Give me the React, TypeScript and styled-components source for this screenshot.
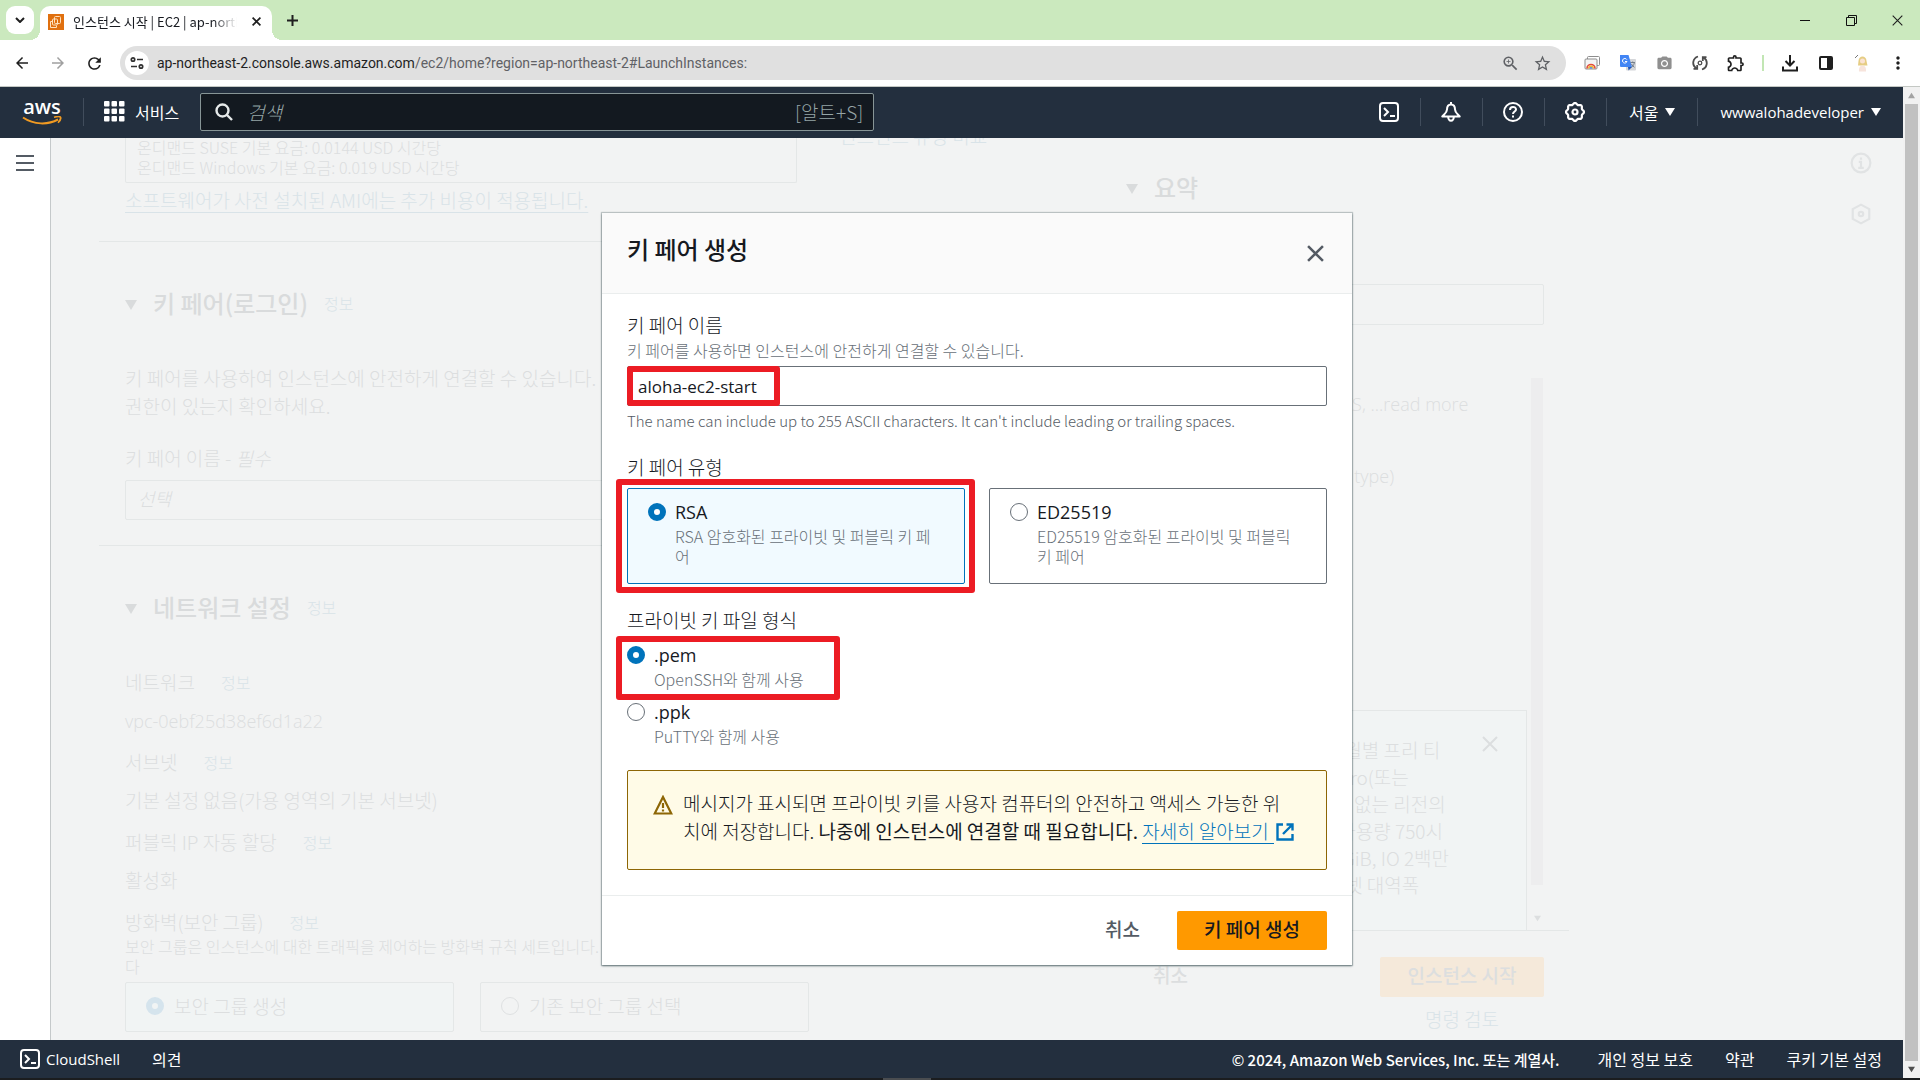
import React from 'react';
import styled, { createGlobalStyle, css } from 'styled-components';
import {
  MdArrowBack,
  MdArrowForward,
  MdRefresh,
  MdZoomIn,
  MdStarBorder,
  MdPhotoCamera,
  MdOutlineExtension,
  MdMoreVert,
} from 'react-icons/md';

const hangul = '"Noto Sans CJK KR", "Open Sans", sans-serif';
const latin = '"Open Sans", "Noto Sans CJK KR", sans-serif';

const c = {
  navy: '#232f3e',
  ink: '#16191f',
  grey: '#687078',
  link: '#0073bb',
  orange: '#ff9900',
  mark: '#ec1c24',
  washBg: '#f2f3f3',
  wash: '#dcdedf',
  washStrong: '#d9dbdc',
  washLine: '#e4e7e7',
  washLink: '#d9e3e8',
};

const Global = createGlobalStyle`
  * { box-sizing: border-box; }
  body { margin: 0; font-family: ${hangul}; font-weight: 300; color: ${c.ink}; }
  button, input, select { font: inherit; color: inherit; margin: 0; }
  button { background: none; border: 0; padding: 0; cursor: pointer; }
  a { text-decoration: none; }
  h1, h2, p, dl, dd, dt, fieldset { margin: 0; padding: 0; border: 0; }
  svg { display: block; flex: none; }
`;

const Window = styled.div`
  display: flex;
  flex-direction: column;
  height: 100vh;
  overflow: hidden;
`;

/* ---------- browser chrome ---------- */

const TabStrip = styled.div`
  display: flex;
  align-items: center;
  height: 40px;
  padding-left: 6px;
  background: #cbe9be;
`;

const TabSearch = styled.button`
  display: grid;
  place-items: center;
  width: 28px;
  height: 28px;
  border-radius: 9px;
  background: #fff;
`;

const Tab = styled.div`
  position: relative;
  display: flex;
  align-items: center;
  align-self: flex-end;
  width: 232px;
  height: 34px;
  margin-left: 6px;
  padding: 0 9px 3px 8px;
  border-radius: 10px 10px 0 0;
  background: #fff;
  &::before,
  &::after {
    content: '';
    position: absolute;
    bottom: 0;
    width: 10px;
    height: 10px;
  }
  &::before {
    left: -10px;
    background: radial-gradient(circle at 0 0, transparent 10px, #fff 10px);
  }
  &::after {
    right: -10px;
    background: radial-gradient(circle at 100% 0, transparent 10px, #fff 10px);
  }
`;

const TabTitle = styled.span`
  flex: 1;
  margin: 0 12px 0 9px;
  overflow: hidden;
  white-space: nowrap;
  font-size: 13px;
  font-weight: 400;
  line-height: 20px;
  mask-image: linear-gradient(to right, #000 85%, transparent);
`;

const IconButton = styled.button<{ $w: number }>`
  display: grid;
  place-items: center;
  width: ${(p) => p.$w}px;
  height: 28px;
  flex: none;
  color: #1f1f1f;
`;

const WindowButtons = styled.div`
  display: flex;
  margin-left: auto;
`;

const Toolbar = styled.div`
  display: flex;
  align-items: center;
  height: 47px;
  padding: 0 4px;
  border-bottom: 1px solid #c4c8c4;
  background: #fff;
`;

const Address = styled.div`
  display: flex;
  flex: 1;
  align-items: center;
  height: 34px;
  margin: 0 8px;
  padding: 0 8px 0 5px;
  border-radius: 17px;
  background: #e0e0e0;
`;

const SiteInfo = styled.button`
  display: grid;
  place-items: center;
  width: 24px;
  height: 24px;
  margin-right: 8px;
  border-radius: 50%;
  background: #fff;
`;

const Url = styled.div`
  flex: 1;
  color: #5f6165;
  font-family: Roboto, ${latin};
  font-size: 14px;
  font-weight: 400;
  white-space: nowrap;
  overflow: hidden;
  b {
    color: #1f1f1f;
    font-weight: 400;
  }
`;

const Divider = styled.span`
  width: 2px;
  height: 16px;
  margin: 0 8px;
  background: #c2e6b4;
`;

/* ---------- console frame ---------- */

const Viewport = styled.div`
  display: flex;
  flex: 1;
  min-height: 0;
`;

const Console = styled.div`
  display: flex;
  flex: 1;
  flex-direction: column;
  min-width: 0;
`;

const Nav = styled.header`
  display: flex;
  align-items: center;
  height: 51px;
  padding: 0 0 2px 22px;
  background: ${c.navy};
  color: #fff;
`;

const Logo = styled.a`
  display: flex;
  flex-direction: column;
  align-items: center;
  width: 40px;
  color: #fff;
  font-family: ${latin};
  font-size: 20px;
  font-weight: 600;
  line-height: 18px;
`;

const NavRule = styled.span`
  width: 1px;
  height: 28px;
  margin: 0 20px 0 21px;
  background: #414d5c;
`;

const Services = styled.button`
  display: flex;
  align-items: center;
  gap: 10px;
  margin-right: 21px;
  font-size: 16px;
  font-weight: 400;
`;

const SearchBox = styled.label`
  display: flex;
  flex: 0 1 674px;
  align-items: center;
  gap: 14px;
  height: 38px;
  padding: 0 10px 0 14px;
  border: 1px solid #879596;
  border-radius: 2px;
  background: #131920;
  color: #95a5a6;
  font-size: 19px;
  input {
    flex: 1;
    min-width: 0;
    padding: 0;
    border: 0;
    outline: 0;
    background: none;
  }
  input::placeholder {
    color: #95a5a6;
    font-style: italic;
  }
`;

const NavEnd = styled.div`
  display: flex;
  align-items: center;
  margin-left: auto;
`;

const NavCell = styled.button<{ $first?: boolean; $wide?: boolean }>`
  display: flex;
  align-items: center;
  justify-content: center;
  gap: 7px;
  width: ${(p) => (p.$wide ? 'auto' : '62px')};
  height: 28px;
  padding: 0 ${(p) => (p.$wide ? 22 : 0)}px;
  border-left: 1px solid ${(p) => (p.$first ? 'transparent' : '#414d5c')};
  font-size: 16px;
  font-weight: 400;
`;

const UserName = styled.span`
  font-family: ${latin};
  font-size: 15px;
  font-weight: 500;
`;

const Workspace = styled.div`
  display: flex;
  flex: 1;
  min-height: 0;
`;

const SideRail = styled.nav`
  display: flex;
  justify-content: center;
  align-items: flex-start;
  width: 51px;
  padding-top: 17px;
  border-right: 1px solid #c5c9ca;
  background: #fff;
`;

const Footer = styled.footer`
  display: flex;
  align-items: center;
  gap: 32px;
  height: 38px;
  padding: 0 21px 0 20px;
  background: ${c.navy};
  font-size: 16px;
  font-weight: 400;
  a,
  span {
    color: #fff;
  }
`;

const ShellLink = styled.button`
  display: flex;
  align-items: center;
  gap: 6px;
  color: #fff;
  font-family: ${latin};
  font-size: 15px;
  font-weight: 500;
`;

const Copyright = styled.span`
  margin-left: auto;
  margin-right: 6px;
  font-size: 15px;
  font-weight: 500;
`;

const PageScroll = styled.div`
  display: flex;
  flex-direction: column;
  align-items: center;
  width: 17px;
  background: #f1f1f1;
`;

const ScrollArrow = styled.span<{ $down?: boolean }>`
  display: grid;
  place-items: center;
  height: 17px;
  color: ${(p) => (p.$down ? '#505050' : '#a3a3a3')};
  svg {
    transform: ${(p) => (p.$down ? 'none' : 'rotate(180deg)')};
  }
`;

const ScrollThumb = styled.span`
  flex: 1;
  width: 13px;
  background: #c1c1c1;
`;

const Taskbar = styled.div`
  display: flex;
  justify-content: center;
  height: 2px;
  padding-right: 106px;
  background: #1b1d1f;
  &::after {
    content: '';
    width: 48px;
    background: #4a4d50;
  }
`;

/* ---------- dimmed page behind the dialog ---------- */

const Main = styled.main`
  position: relative;
  flex: 1;
  min-width: 0;
  overflow: hidden;
  background: ${c.washBg};
`;

const Page = styled.div`
  display: flex;
  height: 100%;
  padding-left: 48px;
  color: ${c.wash};
  font-size: 19px;
  line-height: 28px;
`;

const LaunchForm = styled.div`
  flex: 0 1 969px;
  min-width: 0;
`;

const Section = styled.section`
  padding: 45px 26px 25px;
  border-bottom: 1px solid ${c.washLine};
`;

const TypeSection = styled(Section)`
  padding-top: 0;
  padding-bottom: 27px;
`;

const TypeRow = styled.div`
  display: flex;
  align-items: flex-start;
  gap: 42px;
  margin-top: -16px;
`;

const PriceBox = styled.div`
  width: 672px;
  padding: 15px 11px 5px;
  border: 1px solid ${c.washLine};
  border-top: 0;
  border-radius: 2px;
  font-size: 16px;
  line-height: 20px;
`;

const PaleLink = styled.a<{ $small?: boolean; $rule?: boolean }>`
  color: ${c.washLink};
  font-size: ${(p) => (p.$small ? 16 : 19)}px;
  text-decoration: ${(p) => (p.$rule ? 'underline' : 'none')};
  text-underline-offset: 4px;
`;

const AmiNote = styled.p`
  margin-top: 3px;
`;

const Heading = styled.h2`
  display: flex;
  align-items: center;
  gap: 16px;
  height: 32px;
  margin-bottom: 45px;
  color: ${c.washStrong};
  font-size: 24px;
  font-weight: 500;
  svg {
    margin-top: 4px;
  }
  a {
    font-weight: 300;
  }
`;

const PaleSelect = styled.label`
  display: block;
  margin-top: 24px;
  select {
    display: block;
    appearance: none;
    width: 672px;
    height: 40px;
    margin-top: 8px;
    padding: 0 12px 4px;
    border: 1px solid ${c.washLine};
    border-radius: 2px;
    background: none;
    font-size: 18px;
    font-style: italic;
  }
`;

const Fields = styled.dl`
  display: flex;
  flex-direction: column;
  gap: 14px;
  dt {
    display: flex;
    gap: 26px;
    height: 28px;
  }
  dd {
    height: 28px;
    margin-top: 10px;
  }
`;

const Small = styled.p`
  font-size: 16px;
  line-height: 20px;
`;

const LatinText = styled.span`
  font-family: ${latin};
  font-size: 18px;
  font-weight: 400;
`;

const PaleLatin = styled(LatinText)`
  font-weight: 300;
`;

const GroupTiles = styled.div`
  display: flex;
  gap: 26px;
  margin-top: 6px;
`;

const GroupTile = styled.label<{ $on?: boolean }>`
  display: flex;
  align-items: center;
  gap: 10px;
  width: 329px;
  height: 50px;
  padding: 0 20px 3px;
  border: 1px solid ${c.washLine};
  border-radius: 2px;
  background: ${(p) => (p.$on ? '#f1f4f4' : 'none')};
`;

const Summary = styled.aside`
  display: flex;
  flex: 0 1 468px;
  flex-direction: column;
  height: 930px;
  margin-left: 33px;
  padding-top: 33px;
`;

const SummaryHead = styled(Heading)`
  margin: 0 25px 81px;
`;

const PaleInput = styled.input`
  height: 41px;
  margin: 0 25px;
  border: 1px solid ${c.washLine};
  border-radius: 2px;
  background: none;
`;

const SummaryScroll = styled.div`
  display: flex;
  height: 564px;
  margin: 41px 25px 0;
`;

const SummaryBody = styled.div`
  flex: 1;
  display: flex;
  flex-direction: column;
  gap: 44px;
  padding: 24px 3px 0 0;
`;

const ThinScroll = styled.div`
  display: flex;
  flex-direction: column;
  align-items: center;
  width: 14px;
  padding-bottom: 8px;
  color: ${c.wash};
  &::before {
    content: '';
    flex: 1;
    width: 12px;
    margin: 12px 0 30px;
    background: #ededee;
  }
`;

const FreeTier = styled.div`
  display: flex;
  flex: 1;
  align-items: flex-start;
  justify-content: space-between;
  margin-top: 176px;
  padding: 25px 28px 0 56px;
  border: 1px solid ${c.washLine};
  border-bottom: 0;
  background: #f1f4f4;
  line-height: 27px;
  p {
    white-space: pre;
  }
`;

const SummaryFoot = styled.div`
  display: grid;
  grid-template-columns: 1fr 164px;
  row-gap: 8px;
  align-items: center;
  padding: 26px 25px 0 52px;
  border-top: 1px solid ${c.washLine};
  font-weight: 500;
  button {
    padding-bottom: 4px;
  }
  button:first-child {
    justify-self: start;
  }
  a {
    grid-column: 2;
    justify-self: center;
    font-weight: 300;
  }
`;

const PaleButton = styled.button`
  height: 40px;
  border-radius: 2px;
  background: #f5e9da;
`;

const ToolRail = styled.div`
  display: flex;
  flex-direction: column;
  align-items: center;
  gap: 29px;
  width: 84px;
  margin-left: auto;
  padding-top: 14px;
  color: #e1e3e4;
`;

/* ---------- dialog ---------- */

const Overlay = styled.div`
  position: absolute;
  inset: 0;
  display: flex;
  align-items: center;
  justify-content: center;
`;

const Dialog = styled.div`
  width: 750px;
  background: #fff;
  font-size: 19px;
  line-height: 28px;
  box-shadow: 0 1px 2px rgba(0, 28, 36, 0.5), 0 0 1px 1px rgba(0, 28, 36, 0.2);
`;

const DialogHead = styled.div`
  display: flex;
  align-items: center;
  justify-content: space-between;
  height: 81px;
  padding: 0 28px 8px 25px;
  border-bottom: 1px solid #eaeded;
  background: #fafafa;
  h1 {
    font-size: 24px;
    font-weight: 500;
  }
`;

const CloseButton = styled.button`
  padding-top: 8px;
  color: #545b64;
`;

const DialogBody = styled.div`
  display: flex;
  flex-direction: column;
  gap: 22px;
  padding: 17px 25px 25px;
`;

const Label = styled.label`
  display: block;
  margin-bottom: 1px;
`;

const Legend = styled.legend`
  padding: 0 0 7px;
`;

const Hint = styled.span<{ $latin?: boolean }>`
  display: block;
  color: ${(p) => (p.$latin ? '#545b64' : c.grey)};
  font-size: ${(p) => (p.$latin ? 15 : 16)}px;
  line-height: 20px;
`;

const marked = css<{ $top: number; $right: number; $bottom: number; $left: number }>`
  &::after {
    content: '';
    position: absolute;
    top: ${(p) => p.$top}px;
    right: ${(p) => p.$right}px;
    bottom: ${(p) => p.$bottom}px;
    left: ${(p) => p.$left}px;
    border: 6px solid ${c.mark};
    border-radius: 3px;
    pointer-events: none;
  }
`;

const Marked = styled.div<{ $top: number; $right: number; $bottom: number; $left: number }>`
  position: relative;
  ${marked}
`;

const InputSlot = styled(Marked)`
  margin: 6px 0 5px;
`;

const NameInput = styled.input`
  display: block;
  width: 100%;
  height: 40px;
  padding: 0 10px;
  border: 1px solid #687078;
  border-radius: 2px;
  font-family: ${latin};
  font-size: 17px;
  font-weight: 400;
`;

const Tiles = styled.div`
  display: grid;
  grid-template-columns: 1fr 1fr;
  gap: 24px;
`;

const Choice = styled.label<{ $tile?: boolean; $on?: boolean }>`
  display: grid;
  grid-template-columns: 18px 1fr;
  column-gap: 9px;
  align-items: center;
  ${Hint} {
    grid-column: 2;
  }
  ${(p) =>
    p.$tile &&
    css`
      height: 96px;
      align-content: start;
      padding: 9px 26px 9px 20px;
      border: 1px solid ${p.$on ? c.link : c.grey};
      border-radius: 2px;
      background: ${p.$on ? '#f1faff' : '#fff'};
    `}
`;

const Radio = styled.input<{ $pale?: boolean }>`
  appearance: none;
  width: 18px;
  height: 18px;
  border: 1px solid ${(p) => (p.$pale ? '#dfe1e2' : c.grey)};
  border-radius: 50%;
  background: ${(p) => (p.$pale ? 'none' : '#fff')};
  &:checked {
    border: 6px solid ${(p) => (p.$pale ? '#d5e4ed' : c.link)};
  }
`;

const Formats = styled.div`
  display: flex;
  flex-direction: column;
  align-items: flex-start;
  gap: 9px;
`;

const Notice = styled.div`
  display: flex;
  gap: 10px;
  height: 100px;
  margin-top: 2px;
  padding: 18px 25px;
  border: 1px solid #8d6605;
  border-radius: 2px;
  background: #fffbe7;
  svg {
    margin-top: 6px;
  }
  p {
    padding-right: 5px;
  }
`;

const MoreLink = styled.a`
  display: inline-flex;
  gap: 2px;
  color: ${c.link};
  span {
    height: 27px;
    padding-right: 5px;
    border-bottom: 1px solid ${c.link};
  }
`;

const DialogFoot = styled.div`
  display: flex;
  justify-content: flex-end;
  gap: 37px;
  padding: 15px 25px;
  border-top: 1px solid #eaeded;
  font-weight: 500;
`;

const CancelButton = styled.button`
  padding-bottom: 3px;
  color: #545b64;
`;

const PrimaryButton = styled.button`
  height: 39px;
  padding: 0 27px 3px;
  border-radius: 2px;
  background: ${c.orange};
`;

/* ---------- drawings ---------- */

const Caret = ({ size = 10 }: { size?: number }) => (
  <svg width={size} height={size} viewBox="0 0 11 11" fill="currentColor">
    <path d="M0 1h11L5.500 10z" />
  </svg>
);

const Cross = ({ size, stroke }: { size: number; stroke: number }) => (
  <svg width={size} height={size} viewBox="0 0 16 16" stroke="currentColor" strokeWidth={stroke}>
    <path d="M1 1l14 14M15 1L1 15" />
  </svg>
);

const ShellIcon = ({ size = 20 }: { size?: number }) => (
  <svg width={size} height={size} viewBox="0 0 20 20" fill="none" stroke="currentColor" strokeWidth="2">
    <rect x="1" y="1" width="18" height="18" rx="3" />
    <path d="M5 6l4 4-4 4M11 14h5" />
  </svg>
);

const BellIcon = () => (
  <svg width="20" height="20" viewBox="0 0 20 20" fill="none" stroke="currentColor" strokeWidth="2" strokeLinejoin="round">
    <path d="M10 0v2.500M10 2.500c-3 0-4 2.200-4 5 0 3-2.500 4.500-4.700 7h17.400c-2.200-2.500-4.700-4-4.700-7 0-2.800-1-5-4-5z" />
    <path d="M7.200 15a2.800 3.800 0 0 0 5.600 0" />
  </svg>
);

const HelpIcon = () => (
  <svg width="20" height="20" viewBox="0 0 20 20" fill="none" stroke="currentColor" strokeWidth="2">
    <circle cx="10" cy="10" r="9" />
    <path d="M7 8c0-4 6-4 6-.5C13 9.500 10 9.500 10 12M10 13.500v2" />
  </svg>
);

const gearPath = Array.from({ length: 48 }, (_, i) => {
  const a = (i / 48) * Math.PI * 2;
  const r = 8.300 + 0.800 * Math.cos(a * 8);
  return `${i ? 'L' : 'M'}${(10 + r * Math.sin(a)).toFixed(2)} ${(10 - r * Math.cos(a)).toFixed(2)}`;
}).join('');

const GearIcon = () => (
  <svg width="20" height="20" viewBox="0 0 20 20" fill="none" stroke="currentColor" strokeWidth="2.200" strokeLinejoin="round">
    <path d={`${gearPath}Z`} />
    <circle cx="10" cy="10" r="2.500" />
  </svg>
);

const GridIcon = () => (
  <svg width="21" height="21" viewBox="0 0 21 21" fill="currentColor">
    {[0, 7.500, 15].map((y) => [0, 7.500, 15].map((x) => <rect key={`${x}-${y}`} x={x} y={y} width="5.500" height="5.500" rx="1" />))}
  </svg>
);

const SearchIcon = () => (
  <svg width="18" height="18" viewBox="0 0 18 18" fill="none" stroke="#e6eaea" strokeWidth="2.400">
    <circle cx="7.500" cy="7.500" r="6" />
    <path d="M12 12l5 5" />
  </svg>
);

const Smile = () => (
  <svg width="40" height="9" viewBox="0 0 40 9" fill="none" stroke="#f09a22" strokeWidth="2">
    <path d="M1 1.500c11 7.500 25 7.500 35 2" />
    <path d="M32 1.200c3-.7 6-.7 6.500 0s-.3 3.300-2.500 5.500" strokeWidth="1.600" />
  </svg>
);

const Ec2Icon = () => (
  <svg width="16" height="16" viewBox="0 0 16 16" fill="none" stroke="#ffe1bd">
    <rect width="16" height="16" fill="#e0700f" stroke="none" />
    <rect x="6.500" y="2.500" width="6" height="7" rx="1" />
    <rect x="4.500" y="5" width="5" height="6" rx="1" />
    <path d="M4.500 7.500h-2v6h6v-2" />
  </svg>
);

const SiteIcon = () => (
  <svg width="14" height="14" viewBox="0 0 14 14" fill="none" stroke="#303030" strokeWidth="1.700">
    <circle cx="3" cy="3.500" r="1.700" />
    <path d="M7 3.500h6M1 10.500h6" />
    <circle cx="11" cy="10.500" r="1.700" />
  </svg>
);

const RainbowIcon = () => (
  <svg width="16" height="16" viewBox="0 0 16 16" fill="none">
    <rect x="3.500" y="1.500" width="12" height="9" rx="1" stroke="#8d8d8d" />
    <rect x="1" y="4" width="12" height="10" rx="1" fill="#f4f4f4" stroke="#8d8d8d" />
    <path d="M3 13.500a4 4 0 0 1 8 0" stroke="#e14b3b" strokeWidth="1.600" />
    <path d="M4.700 13.500a2.300 2.300 0 0 1 4.600 0" stroke="#f2b632" strokeWidth="1.500" />
    <path d="M5.500 13.500a1.500 1.500 0 0 1 3 0" fill="#3c7de0" />
  </svg>
);

const TranslateIcon = () => (
  <svg width="16" height="16" viewBox="0 0 16 16" fill="none">
    <rect x="6" y="4" width="10" height="11.500" rx="1" fill="#d4d6d9" />
    <path d="M0 0h8.500l3.500 12H1a1 1 0 0 1-1-1z" fill="#4285f4" />
    <path d="M8.500 15.500l3.500-3.500H8z" fill="#2458b8" />
    <path d="M6.800 4.600A2.300 2.300 0 1 0 7 6.500H5" stroke="#fff" />
    <path d="M10.500 7.500h4.500M12.700 6.500v1M14.300 8c-.5 2-1.500 3.500-3 4.500M11.500 9c.7 1.500 1.700 2.600 3 3.300" stroke="#6c7683" strokeWidth=".9" />
  </svg>
);

const SyncIcon = () => (
  <svg width="16" height="16" viewBox="0 0 16 16" fill="none" stroke="#4d4d4d" strokeWidth="1.800">
    <path d="M6 1.500A6.600 6.600 0 0 0 4 13.200M1.500 13.800h3.700V10" />
    <path d="M10 14.500A6.600 6.600 0 0 0 12 2.800M14.500 2.200h-3.700V6" />
    <circle cx="8" cy="8" r="1.800" strokeWidth="1.300" />
  </svg>
);

const DownloadIcon = () => (
  <svg width="16" height="17" viewBox="0 0 16 17" fill="none" stroke="#1f1f1f" strokeWidth="2">
    <path d="M8 0v10M3.500 6L8 10.500 12.500 6M1 11.500V15.500h14v-4" />
  </svg>
);

const PanelIcon = () => (
  <svg width="14" height="14" viewBox="0 0 14 14">
    <rect x="1" y="1" width="12" height="12" rx="1" fill="none" stroke="#1f1f1f" strokeWidth="2" />
    <path d="M8 1h5v12H8z" fill="#1f1f1f" />
  </svg>
);

const AvatarIcon = () => (
  <svg width="16" height="18" viewBox="0 0 16 18">
    <path d="M1 4l3-3" stroke="#777" />
    <path d="M4.500 7c0-6 8-6 8 0l1 4.500H4z" fill="#e6cd84" />
    <circle cx="8.500" cy="7" r="2.500" fill="#fbe3d2" />
    <path d="M5 17.500c-1-8 8-8 7 0z" fill="#f7e4dc" />
  </svg>
);

const WarningIcon = () => (
  <svg width="20" height="20" viewBox="0 0 20 20" fill="none" stroke="#8d6605" strokeWidth="2.200">
    <path d="M10 2L1.700 18.500h16.600z" />
    <path d="M10 8v5M10 14.500v2" />
  </svg>
);

const ExternalIcon = () => (
  <svg width="18" height="18" viewBox="0 0 18 18" fill="none" stroke="currentColor" strokeWidth="2.400">
    <path d="M7 1.500H1.500v15h15V11M10.500 1.500h6V7.500M16 2L7 11" />
  </svg>
);

const InfoIcon = () => (
  <svg width="22" height="22" viewBox="0 0 20 20" fill="none" stroke="currentColor" strokeWidth="2">
    <circle cx="10" cy="10" r="8.500" />
    <path d="M10 5v2M8 9h2v5M7.500 14.500h5" />
  </svg>
);

const HexIcon = () => (
  <svg width="22" height="22" viewBox="0 0 20 20" fill="none" stroke="currentColor" strokeWidth="2">
    <path d="M10 1.500l7.500 4v9l-7.500 4-7.500-4v-9z" />
    <circle cx="10" cy="10" r="2" />
  </svg>
);

/* ---------- page ---------- */

const fields = [
  { name: '네트워크', value: <PaleLatin>vpc-0ebf25d38ef6d1a22</PaleLatin> },
  { name: '서브넷', value: '기본 설정 없음(가용 영역의 기본 서브넷)' },
  { name: '퍼블릭 IP 자동 할당', value: '활성화' },
];

const Info = () => (
  <PaleLink $small href="#info">
    정보
  </PaleLink>
);

function Browser() {
  return (
    <>
      <TabStrip>
        <TabSearch aria-label="탭 검색">
          <svg width="10" height="6" viewBox="0 0 10 6" fill="none" stroke="#1f1f1f" strokeWidth="2">
            <path d="M1 1l4 4 4-4" />
          </svg>
        </TabSearch>
        <Tab>
          <Ec2Icon />
          <TabTitle>인스턴스 시작 | EC2 | ap-northeast-2</TabTitle>
          <IconButton $w={14} aria-label="탭 닫기">
            <Cross size={9} stroke={3} />
          </IconButton>
        </Tab>
        <IconButton $w={40} aria-label="새 탭">
          <svg width="11" height="11" viewBox="0 0 11 11" stroke="currentColor" strokeWidth="2">
            <path d="M5.500 0v11M0 5.500h11" />
          </svg>
        </IconButton>
        <WindowButtons>
          <IconButton $w={46} aria-label="최소화">
            <svg width="10" height="10" stroke="#111">
              <path d="M0 5.500h10" />
            </svg>
          </IconButton>
          <IconButton $w={46} aria-label="이전 크기로">
            <svg width="11" height="11" fill="none" stroke="#111">
              <path d="M.5 2.500h8v8h-8zM2.500 2.500v-2h8v8h-2" />
            </svg>
          </IconButton>
          <IconButton $w={46} aria-label="닫기">
            <Cross size={11} stroke={1.600} />
          </IconButton>
        </WindowButtons>
      </TabStrip>
      <Toolbar>
        <IconButton $w={36} aria-label="뒤로">
          <MdArrowBack size={18} />
        </IconButton>
        <IconButton $w={36} aria-label="앞으로">
          <MdArrowForward size={18} color="#a0a0a0" />
        </IconButton>
        <IconButton $w={36} aria-label="새로고침">
          <MdRefresh size={19} />
        </IconButton>
        <Address>
          <SiteInfo aria-label="사이트 정보">
            <SiteIcon />
          </SiteInfo>
          <Url>
            <b>ap-northeast-2.console.aws.amazon.com</b>/ec2/home?region=ap-northeast-2#LaunchInstances:
          </Url>
          <IconButton $w={32} aria-label="확대">
            <MdZoomIn size={19} color="#5f6165" />
          </IconButton>
          <IconButton $w={32} aria-label="북마크">
            <MdStarBorder size={19} color="#5f6165" />
          </IconButton>
        </Address>
        <IconButton $w={36} aria-label="미리보기">
          <RainbowIcon />
        </IconButton>
        <IconButton $w={36} aria-label="번역">
          <TranslateIcon />
        </IconButton>
        <IconButton $w={36} aria-label="캡처">
          <MdPhotoCamera size={17} color="#8f8f8f" />
        </IconButton>
        <IconButton $w={36} aria-label="동기화">
          <SyncIcon />
        </IconButton>
        <IconButton $w={36} aria-label="확장 프로그램">
          <MdOutlineExtension size={20} />
        </IconButton>
        <Divider />
        <IconButton $w={36} aria-label="다운로드">
          <DownloadIcon />
        </IconButton>
        <IconButton $w={36} aria-label="측면 패널">
          <PanelIcon />
        </IconButton>
        <IconButton $w={36} aria-label="프로필">
          <AvatarIcon />
        </IconButton>
        <IconButton $w={36} aria-label="메뉴">
          <MdMoreVert size={20} />
        </IconButton>
      </Toolbar>
    </>
  );
}

function TopNav() {
  return (
    <Nav>
      <Logo href="#home">
        aws
        <Smile />
      </Logo>
      <NavRule />
      <Services>
        <GridIcon />
        서비스
      </Services>
      <SearchBox>
        <SearchIcon />
        <input type="search" placeholder="검색" aria-label="검색" />
        [알트+S]
      </SearchBox>
      <NavEnd>
        <NavCell $first aria-label="CloudShell">
          <ShellIcon />
        </NavCell>
        <NavCell aria-label="알림">
          <BellIcon />
        </NavCell>
        <NavCell aria-label="도움말">
          <HelpIcon />
        </NavCell>
        <NavCell aria-label="설정">
          <GearIcon />
        </NavCell>
        <NavCell $wide>
          서울
          <Caret />
        </NavCell>
        <NavCell $wide>
          <UserName>wwwalohadeveloper</UserName>
          <Caret />
        </NavCell>
      </NavEnd>
    </Nav>
  );
}

function LaunchPage() {
  return (
    <Page>
      <LaunchForm>
        <TypeSection>
          <TypeRow>
            <PriceBox>
              온디맨드 SUSE 기본 요금: 0.0144 USD 시간당
              <br />
              온디맨드 Windows 기본 요금: 0.019 USD 시간당
            </PriceBox>
            <PaleLink href="#compare">인스턴스 유형 비교</PaleLink>
          </TypeRow>
          <AmiNote>
            <PaleLink href="#ami" $rule>
              소프트웨어가 사전 설치된 AMI에는 추가 비용이 적용됩니다.
            </PaleLink>
          </AmiNote>
        </TypeSection>
        <Section>
          <Heading>
            <Caret size={12} />
            키 페어(로그인)
            <Info />
          </Heading>
          <p>
            키 페어를 사용하여 인스턴스에 안전하게 연결할 수 있습니다.
            <br />
            권한이 있는지 확인하세요.
          </p>
          <PaleSelect>
            키 페어 이름 - <i>필수</i>
            <select>
              <option>선택</option>
            </select>
          </PaleSelect>
        </Section>
        <Section>
          <Heading>
            <Caret size={12} />
            네트워크 설정
            <Info />
          </Heading>
          <Fields>
            {fields.map((f) => (
              <div key={f.name}>
                <dt>
                  {f.name}
                  <Info />
                </dt>
                <dd>{f.value}</dd>
              </div>
            ))}
            <dt>
              방화벽(보안 그룹)
              <Info />
            </dt>
          </Fields>
          <Small>
            보안 그룹은 인스턴스에 대한 트래픽을 제어하는 방화벽 규칙 세트입니다.
            <br />다
          </Small>
          <GroupTiles>
            <GroupTile $on>
              <Radio $pale type="radio" name="group" defaultChecked />
              보안 그룹 생성
            </GroupTile>
            <GroupTile>
              <Radio $pale type="radio" name="group" />
              기존 보안 그룹 선택
            </GroupTile>
          </GroupTiles>
        </Section>
      </LaunchForm>
      <Summary>
        <SummaryHead>
          <Caret size={12} />
          요약
        </SummaryHead>
        <PaleInput aria-label="인스턴스 개수" />
        <SummaryScroll>
          <SummaryBody>
            <PaleLatin>Canonical, Ubuntu, 22.04 LTS, ...read more</PaleLatin>
            <PaleLatin>Virtual server type (instance type)</PaleLatin>
            <FreeTier>
              <p>
                {'프리 티어: 첫 해에는 월별 프리 티\n어 AMI에 대한 t2.micro(또는\nt2.micro를 사용할 수 없는 리전의\nt3.micro) 인스턴스 사용량 750시\n간, EBS 스토리지 30GiB, IO 2백만\n개, 스냅샷 1GB, 인터넷 대역폭'}
              </p>
              <Cross size={16} stroke={2} />
            </FreeTier>
          </SummaryBody>
          <ThinScroll>
            <Caret size={7} />
          </ThinScroll>
        </SummaryScroll>
        <SummaryFoot>
          <button>취소</button>
          <PaleButton>인스턴스 시작</PaleButton>
          <PaleLink href="#review">명령 검토</PaleLink>
        </SummaryFoot>
      </Summary>
      <ToolRail>
        <InfoIcon />
        <HexIcon />
      </ToolRail>
    </Page>
  );
}

function KeyPairDialog() {
  return (
    <Overlay>
      <Dialog role="dialog" aria-labelledby="dialog-title">
        <DialogHead>
          <h1 id="dialog-title">키 페어 생성</h1>
          <CloseButton aria-label="닫기">
            <Cross size={17} stroke={2.400} />
          </CloseButton>
        </DialogHead>
        <DialogBody>
          <div>
            <Label htmlFor="key-name">키 페어 이름</Label>
            <Hint>키 페어를 사용하면 인스턴스에 안전하게 연결할 수 있습니다.</Hint>
            <InputSlot $top={0} $right={547} $bottom={0} $left={0}>
              <NameInput id="key-name" defaultValue="aloha-ec2-start" />
            </InputSlot>
            <Hint $latin>
              The name can include up to 255 ASCII characters. It can't include leading or trailing spaces.
            </Hint>
          </div>
          <fieldset>
            <Legend>키 페어 유형</Legend>
            <Tiles>
              <Marked $top={-9} $right={-10} $bottom={-9} $left={-11}>
                <Choice $tile $on>
                  <Radio type="radio" name="type" defaultChecked />
                  <LatinText>RSA</LatinText>
                  <Hint>RSA 암호화된 프라이빗 및 퍼블릭 키 페어</Hint>
                </Choice>
              </Marked>
              <Choice $tile>
                <Radio type="radio" name="type" />
                <LatinText>ED25519</LatinText>
                <Hint>ED25519 암호화된 프라이빗 및 퍼블릭 키 페어</Hint>
              </Choice>
            </Tiles>
          </fieldset>
          <fieldset>
            <Legend>프라이빗 키 파일 형식</Legend>
            <Formats>
              <Marked $top={-5} $right={-36} $bottom={-11} $left={-11}>
                <Choice>
                  <Radio type="radio" name="format" defaultChecked />
                  <LatinText>.pem</LatinText>
                  <Hint>OpenSSH와 함께 사용</Hint>
                </Choice>
              </Marked>
              <Choice>
                <Radio type="radio" name="format" />
                <LatinText>.ppk</LatinText>
                <Hint>PuTTY와 함께 사용</Hint>
              </Choice>
            </Formats>
          </fieldset>
          <Notice>
            <WarningIcon />
            <p>
              메시지가 표시되면 프라이빗 키를 사용자 컴퓨터의 안전하고 액세스 가능한 위치에 저장합니다.{' '}
              <b>나중에 인스턴스에 연결할 때 필요합니다.</b>{' '}
              <MoreLink href="#learn">
                <span>자세히 알아보기</span>
                <ExternalIcon />
              </MoreLink>
            </p>
          </Notice>
        </DialogBody>
        <DialogFoot>
          <CancelButton>취소</CancelButton>
          <PrimaryButton>키 페어 생성</PrimaryButton>
        </DialogFoot>
      </Dialog>
    </Overlay>
  );
}

export default function App() {
  return (
    <Window>
      <Global />
      <Browser />
      <Viewport>
        <Console>
          <TopNav />
          <Workspace>
            <SideRail>
              <button aria-label="메뉴 열기">
                <svg width="18" height="16" viewBox="0 0 18 16" stroke="#545b64" strokeWidth="2">
                  <path d="M0 1h18M0 8h18M0 15h18" />
                </svg>
              </button>
            </SideRail>
            <Main>
              <LaunchPage />
              <KeyPairDialog />
            </Main>
          </Workspace>
          <Footer>
            <ShellLink>
              <ShellIcon />
              CloudShell
            </ShellLink>
            <a href="#feedback">의견</a>
            <Copyright>© 2024, Amazon Web Services, Inc. 또는 계열사.</Copyright>
            <a href="#privacy">개인 정보 보호</a>
            <a href="#terms">약관</a>
            <a href="#cookies">쿠키 기본 설정</a>
          </Footer>
        </Console>
        <PageScroll>
          <ScrollArrow>
            <Caret size={7} />
          </ScrollArrow>
          <ScrollThumb />
          <ScrollArrow $down>
            <Caret size={7} />
          </ScrollArrow>
        </PageScroll>
      </Viewport>
      <Taskbar />
    </Window>
  );
}
